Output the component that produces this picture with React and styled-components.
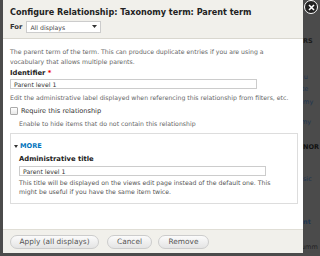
import React from "react";
import styled, { createGlobalStyle } from "styled-components";

const Global = createGlobalStyle`
  html, body { margin: 0; padding: 0; }
  body {
    width: 320px; height: 256px; overflow: hidden;
    background: #4b4b4b;
    font-family: "DejaVu Sans", Verdana, sans-serif;
  }
`;

const Page = styled.div`
  position: relative;
  display: flex;
  width: 320px;
  height: 256px;
  padding-left: 3px;
  box-sizing: border-box;
`;

const Dialog = styled.div`
  position: relative;
  width: 300px;
  height: 253px;
  background: #fff;
  display: flex;
  flex-direction: column;
  flex-shrink: 0;
`;

const Header = styled.div`
  background: #f1f0eb;
  border-bottom: 1px solid #d9d7cf;
  height: 39px;
  padding: 7px 7px 0 7px;
  box-sizing: border-box;
  display: flex;
  flex-direction: column;
  gap: 3px;
  flex-shrink: 0;
`;

const Title = styled.div`
  font-size: 8.1px;
  font-weight: bold;
  color: #222;
  line-height: 11px;
  white-space: nowrap;
`;

const ForRow = styled.div`
  display: flex;
  align-items: center;
  gap: 4px;
  font-size: 6.8px;
  font-weight: bold;
  color: #333;
`;

const Select = styled.div`
  width: 75px;
  height: 12px;
  box-sizing: border-box;
  border: 1px solid #ccc;
  background: #fff;
  display: flex;
  align-items: center;
  justify-content: space-between;
  padding: 0 3px;
  font-weight: normal;
  font-size: 6.2px;
  color: #444;
`;

const Body = styled.div`
  flex: 1;
  padding: 8px 7px 0 7px;
  display: flex;
  flex-direction: column;
`;

const Desc = styled.div`
  font-size: 6.2px;
  line-height: ${p => p.$lh || 10}px;
  color: ${p => p.$dark ? "#555" : "#666"};
  padding-left: ${p => p.$indent || 0}px;
  margin-top: ${p => p.$mt || 0}px;
  white-space: nowrap;
`;

const Label = styled.div`
  font-size: 6.8px;
  font-weight: bold;
  color: #222;
  line-height: 9px;
  margin-top: ${p => p.$mt || 0}px;
  span { color: #e00; }
`;

const Input = styled.div`
  width: ${p => p.$w}px;
  height: 10px;
  box-sizing: border-box;
  border: 1px solid #ccc;
  font-size: 6.2px;
  color: #333;
  padding: 0 3px;
  display: flex;
  align-items: center;
  margin-top: ${p => p.$mt || 1}px;
`;

const CheckRow = styled.div`
  display: flex;
  align-items: center;
  gap: 3px;
  margin-top: 4px;
  height: 8px;
  font-size: 6.6px;
  color: #333;
`;

const Box = styled.span`
  width: 6px;
  height: 6px;
  border: 1px solid #aaa;
  border-radius: 1px;
  background: linear-gradient(#fff, #e8e8e8);
`;

const Fieldset = styled.div`
  margin-top: 4px;
  border: 1px solid #ddd;
  width: 288px;
  box-sizing: border-box;
  padding: 8px 7px 7px 8px;
`;

const Legend = styled.div`
  font-size: 6.6px;
  color: #0074bd;
  font-weight: bold;
  margin-left: -5px;
  display: flex;
  align-items: center;
  gap: 2px;
  line-height: 8px;
  &::before {
    content: "";
    border-left: 2px solid transparent;
    border-right: 2px solid transparent;
    border-top: 3px solid #333;
  }
`;

const Footer = styled.div`
  height: 24px;
  background: #f1f0eb;
  border-top: 1px solid #e0ded6;
  box-sizing: border-box;
  display: flex;
  align-items: center;
  padding: 0 7px;
  flex-shrink: 0;
`;

const Button = styled.div`
  width: ${p => p.$w}px;
  margin-right: ${p => p.$mr || 0}px;
  height: 14px;
  border: 1px solid #ccc;
  border-radius: 8px;
  background: linear-gradient(#fbfbfb, #e4e4e4);
  font-size: 7.4px;
  color: #555;
  display: flex;
  align-items: center;
  justify-content: center;
  box-sizing: border-box;
`;

const Close = styled.div`
  position: absolute;
  left: 304px;
  top: 0;
  width: 14px;
  height: 14px;
  border-radius: 50%;
  background: #222;
  border: 1.5px solid #fff;
  box-sizing: border-box;
  display: flex;
  align-items: center;
  justify-content: center;
`;

const Behind = styled.div`
  flex: 1;
  overflow: hidden;
  position: relative;
  font-size: 6.5px;
  white-space: nowrap;
`;

const BgText = styled.div`
  position: absolute;
  left: ${p => p.$x}px;
  top: ${p => p.$y}px;
  color: ${p => p.$c};
  font-weight: ${p => p.$b ? "bold" : "normal"};
`;

export default function App() {
  return (
    <>
      <Global />
      <Page>
        <Dialog>
          <Header>
            <Title>Configure Relationship: Taxonomy term: Parent term</Title>
            <ForRow>
              For
              <Select>
                All displays
                <svg width="5" height="4" viewBox="0 0 5 4"><path d="M0 0h5L2.5 3z" fill="#333" /></svg>
              </Select>
            </ForRow>
          </Header>
          <Body>
            <Desc>The parent term of the term. This can produce duplicate entries if you are using a<br />vocabulary that allows multiple parents.</Desc>
            <Label $mt={2}>Identifier <span>*</span></Label>
            <Input $w={247}>Parent level 1</Input>
            <Desc $mt={4}>Edit the administrative label displayed when referencing this relationship from filters, etc.</Desc>
            <CheckRow><Box />Require this relationship</CheckRow>
            <Desc $indent={9} $mt={4}>Enable to hide items that do not contain this relationship</Desc>
            <Fieldset>
              <Legend>MORE</Legend>
              <Label $mt={5}>Administrative title</Label>
              <Input $w={247} $mt={2}>Parent level 1</Input>
              <Desc $dark $lh={9} $mt={2}>This title will be displayed on the views edit page instead of the default one. This<br />might be useful if you have the same item twice.</Desc>
            </Fieldset>
          </Body>
          <Footer>
            <Button $w={89} $mr={8}>Apply (all displays)</Button>
            <Button $w={45} $mr={6}>Cancel</Button>
            <Button $w={51}>Remove</Button>
          </Footer>
        </Dialog>
        <Behind>
          <BgText $x={0} $y={37} $c="#1a1a1a" $b>RS</BgText>
          <BgText $x={-12} $y={73} $c="#1f3550">ent u</BgText>
          <BgText $x={-10} $y={85} $c="#1f3550">nt te</BgText>
          <BgText $x={-8} $y={98} $c="#1f3550">nomy</BgText>
          <BgText $x={-6} $y={118} $c="#1f3550">omy</BgText>
          <BgText $x={0} $y={143} $c="#111" $b>NOR</BgText>
          <BgText $x={-4} $y={175} $c="#1f3550">asic</BgText>
          <BgText $x={0} $y={218} $c="#1f3550" $b>nt</BgText>
          <BgText $x={-2} $y={243} $c="#222">umm</BgText>
        </Behind>
        <Close>
          <svg width="7" height="7" viewBox="0 0 7 7"><path d="M1 1L6 6M6 1L1 6" stroke="#fff" strokeWidth="1.6" /></svg>
        </Close>
      </Page>
    </>
  );
}
